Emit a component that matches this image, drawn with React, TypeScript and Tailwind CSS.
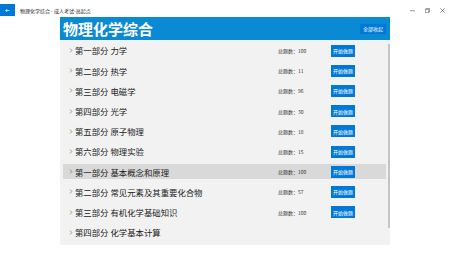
import React from "react";

const rows: { title: string; count?: number; active?: boolean }[] = [
  { title: "第一部分 力学", count: 100 },
  { title: "第二部分 热学", count: 11 },
  { title: "第三部分 电磁学", count: 96 },
  { title: "第四部分 光学", count: 30 },
  { title: "第五部分 原子物理", count: 18 },
  { title: "第六部分 物理实验", count: 15 },
  { title: "第一部分 基本概念和原理", count: 100, active: true },
  { title: "第二部分 常见元素及其重要化合物", count: 57 },
  { title: "第三部分 有机化学基础知识", count: 100 },
  { title: "第四部分 化学基本计算" },
];

const font = { fontFamily: '"Noto Sans CJK SC", "Noto Sans", sans-serif' };

export default function App() {
  return (
    <div className="w-[450px] h-[253px] bg-white flex flex-col overflow-hidden" style={font}>
      <div className="h-[17px] flex items-center relative">
        <div className="w-[15px] h-[12px] mt-[3px] bg-[#0078d7] flex items-center justify-center">
          <svg width="5" height="5" viewBox="0 0 10 10">
            <path d="M9 5H1.5M4.5 2L1.5 5l3 3" stroke="white" strokeWidth="1.4" fill="none" />
          </svg>
        </div>
        <span className="ml-[5px] mt-[3px] text-[5px] leading-none text-[#222]">物理化学综合 - 成人考试-高起点</span>
        <div className="ml-auto mr-[5px] mt-[3px] flex items-center gap-[10px] text-[#333]">
          <svg width="5" height="5" viewBox="0 0 10 10"><path d="M0 5.5h10" stroke="#333" strokeWidth="1" /></svg>
          <svg width="5" height="5" viewBox="0 0 10 10"><path d="M0.5 2.5h7v7h-7zM2.5 2.5V0.5h7v7h-2" stroke="#333" strokeWidth="1" fill="none" /></svg>
          <svg width="5" height="5" viewBox="0 0 10 10"><path d="M0.5 0.5l9 9M9.5 0.5l-9 9" stroke="#333" strokeWidth="1" /></svg>
        </div>
      </div>
      <div className="ml-[60px] w-[330px]">
        <div className="h-[23px] bg-[#0a8ad2] flex items-center px-[3px]">
          <span className="text-[15px] leading-none font-bold text-white">物理化学综合</span>
          <div className="ml-auto mr-[1px] h-[10px] px-[3px] bg-[#0078d7] flex items-center text-[5px] leading-none text-white">
            全部收起
          </div>
        </div>
        <div className="relative h-[205px] bg-[#f2f2f2] pt-[0.5px]">
          {rows.map((r, i) => (
            <div key={i} className="h-[20.2px] flex items-center">
              <div
                className={`h-[15px] w-[323px] ml-[3px] flex items-center ${r.active ? "bg-[#d9d9d9]" : ""}`}
              >
                <svg className="ml-[6px]" width="4" height="5" viewBox="0 0 4 6">
                  <path d="M1 0.8L3 3 1 5.2" stroke="#555" strokeWidth="0.7" fill="none" />
                </svg>
                <span className="ml-[2px] text-[8.4px] leading-none text-[#1a1a1a]">{r.title}</span>
                {r.count !== undefined && (
                  <>
                    <span className="ml-auto w-[53px] text-[5px] leading-none text-[#333]">总题数：{r.count}</span>
                    <div className="mr-[31px] h-[12px] w-[24px] bg-[#0078d7] flex items-center justify-center text-[5px] leading-none text-white">
                      开始做题
                    </div>
                  </>
                )}
              </div>
            </div>
          ))}
          <div className="absolute right-0 top-[4px] w-[2px] h-[184px] bg-[#c4c4c4]" />
        </div>
      </div>
    </div>
  );
}
